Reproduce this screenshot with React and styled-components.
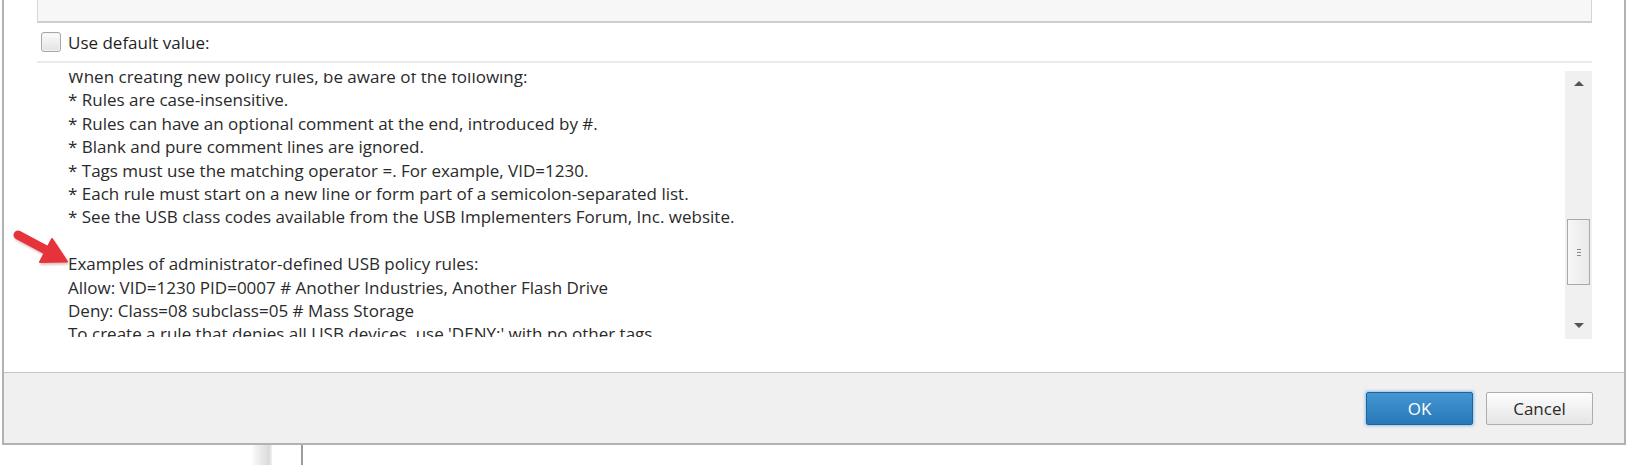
import React from 'react';
import styled, { createGlobalStyle } from 'styled-components';

const GlobalStyle = createGlobalStyle`
  html, body {
    margin: 0;
    padding: 0;
    background: #ffffff;
    overflow: hidden;
  }
  body {
    font-family: 'Open Sans', 'Noto Sans', 'Liberation Sans', sans-serif;
    color: #262626;
  }
`;

const Screen = styled.div`
  position: relative;
  width: 1631px;
  height: 465px;
  display: flex;
  flex-direction: column;
`;

const Dialog = styled.div`
  margin-left: 2px;
  width: 1624px;
  height: 445px;
  box-sizing: border-box;
  border: 2px solid #b2b2b2;
  border-top: none;
  display: flex;
  flex-direction: column;
  background: #ffffff;
`;

const Content = styled.div`
  flex: 1;
  display: flex;
  flex-direction: column;
  padding: 0 32px 0 33px;
`;

const ValueBox = styled.div`
  height: 23px;
  box-sizing: border-box;
  background: #f7f7f7;
  border: 1px solid #d6d6d6;
  border-top: none;
  border-bottom: 2px solid #cdcdcd;
`;

const CheckRow = styled.label`
  display: flex;
  align-items: center;
  gap: 7px;
  margin: 9px 0 0 4px;
  height: 20px;
  font-size: 17px;
  color: #1f1f1f;
`;

const CheckBox = styled.span`
  width: 20px;
  height: 20px;
  box-sizing: border-box;
  border-radius: 3px;
  border: 1px solid #a7a7a7;
  background: linear-gradient(#fbfbfb, #e3e3e3);
  box-shadow: inset 0 0 0 1px #f2f2f2;
`;

const Separator = styled.div`
  margin-top: 9px;
  height: 2px;
  background: #ebebeb;
`;

const ScrollArea = styled.div`
  display: flex;
  height: 276px;
`;

const TextViewport = styled.div`
  flex: 1;
  margin-top: 10px;
  height: 264px;
  overflow: hidden;
  padding-left: 31px;
`;

const TextBody = styled.div`
  margin-top: ${({ offset }) => -offset}px;
  font-size: 17px;
  line-height: 23.4px;
  white-space: pre;
  color: #2a2a2a;
`;

const Line = styled.div`
  height: 23.4px;
`;

const ScrollBar = styled.div`
  width: 27px;
  margin-top: 8px;
  background: #f0f0f0;
  display: flex;
  flex-direction: column;
  align-items: center;
`;

const Arrow = styled.div`
  width: 0;
  height: 0;
  border-left: 5px solid transparent;
  border-right: 5px solid transparent;
  ${({ down }) =>
    down ? 'border-top: 5px solid #555;' : 'border-bottom: 5px solid #555;'}
  margin-top: ${({ gap }) => gap}px;
`;

const Thumb = styled.div`
  margin-top: ${({ top }) => top}px;
  width: 23px;
  height: 66px;
  box-sizing: border-box;
  border: 1px solid #a9a9a9;
  background: linear-gradient(to right, #f6f6f6, #e9e9e9);
  display: flex;
  flex-direction: column;
  align-items: center;
  justify-content: center;
  gap: 2px;
`;

const Grip = styled.span`
  width: 4px;
  height: 1px;
  background: #8a8a8a;
`;

const Footer = styled.div`
  height: 71px;
  box-sizing: border-box;
  border-top: 1px solid #c6c6c6;
  background: #f0f0f0;
  display: flex;
  justify-content: flex-end;
  align-items: flex-start;
  gap: 13px;
  padding: 19px 31px 0 0;
`;

const Button = styled.button`
  width: 107px;
  height: 33px;
  box-sizing: border-box;
  border-radius: 2px;
  font-family: inherit;
  font-size: 17px;
  padding: 0;
  border: 1px solid ${({ primary }) => (primary ? '#1f649e' : '#adadad')};
  color: ${({ primary }) => (primary ? '#ffffff' : '#2b2b2b')};
  background: ${({ primary }) =>
    primary
      ? 'linear-gradient(#4596d3, #2878b9)'
      : 'linear-gradient(#fdfdfd, #e5e5e5)'};
  box-shadow: ${({ primary }) =>
    primary ? '0 0 3px 1px rgba(70, 150, 215, 0.55)' : 'none'};
`;

const Behind = styled.div`
  flex: 1;
  display: flex;
  padding-left: 252px;
  gap: 29px;
`;

const ShadeStrip = styled.div`
  width: 20px;
  background: linear-gradient(to right, #fbfbfb, #dadada 85%, #f2f2f2);
`;

const SplitLine = styled.div`
  width: 2px;
  background: #9c9c9c;
`;

const Pointer = styled.svg`
  position: absolute;
  left: 10px;
  top: 228px;
  filter: drop-shadow(1px 2px 1px rgba(120, 0, 0, 0.25));
`;

const helpLines = [
  'When creating new policy rules, be aware of the following:',
  '* Rules are case-insensitive.',
  '* Rules can have an optional comment at the end, introduced by #.',
  '* Blank and pure comment lines are ignored.',
  '* Tags must use the matching operator =. For example, VID=1230.',
  '* Each rule must start on a new line or form part of a semicolon-separated list.',
  '* See the USB class codes available from the USB Implementers Forum, Inc. website.',
  '',
  'Examples of administrator-defined USB policy rules:',
  'Allow: VID=1230 PID=0007 # Another Industries, Another Flash Drive',
  'Deny: Class=08 subclass=05 # Mass Storage',
  "To create a rule that denies all USB devices, use 'DENY:' with no other tags.",
];

export default function App() {
  return (
    <>
      <GlobalStyle />
      <Screen>
        <Dialog>
          <Content>
            <ValueBox />
            <CheckRow>
              <CheckBox />
              Use default value:
            </CheckRow>
            <Separator />
            <ScrollArea>
              <TextViewport>
                <TextBody offset={8}>
                  {helpLines.map((text, i) => (
                    <Line key={i}>{text}</Line>
                  ))}
                </TextBody>
              </TextViewport>
              <ScrollBar>
                <Arrow gap={10} />
                <Thumb top={133}>
                  <Grip />
                  <Grip />
                  <Grip />
                </Thumb>
                <Arrow down gap={38} />
              </ScrollBar>
            </ScrollArea>
          </Content>
          <Footer>
            <Button primary>OK</Button>
            <Button>Cancel</Button>
          </Footer>
        </Dialog>
        <Behind>
          <ShadeStrip />
          <SplitLine />
        </Behind>
        <Pointer width="62" height="42" viewBox="0 0 62 42">
          <path d="M8 7 L38 23" stroke="#e6333b" strokeWidth="9" strokeLinecap="round" />
          <path d="M57 33.5 L30 34 L42 11 Z" fill="#e6333b" strokeLinejoin="round" stroke="#e6333b" strokeWidth="2" />
        </Pointer>
      </Screen>
    </>
  );
}
